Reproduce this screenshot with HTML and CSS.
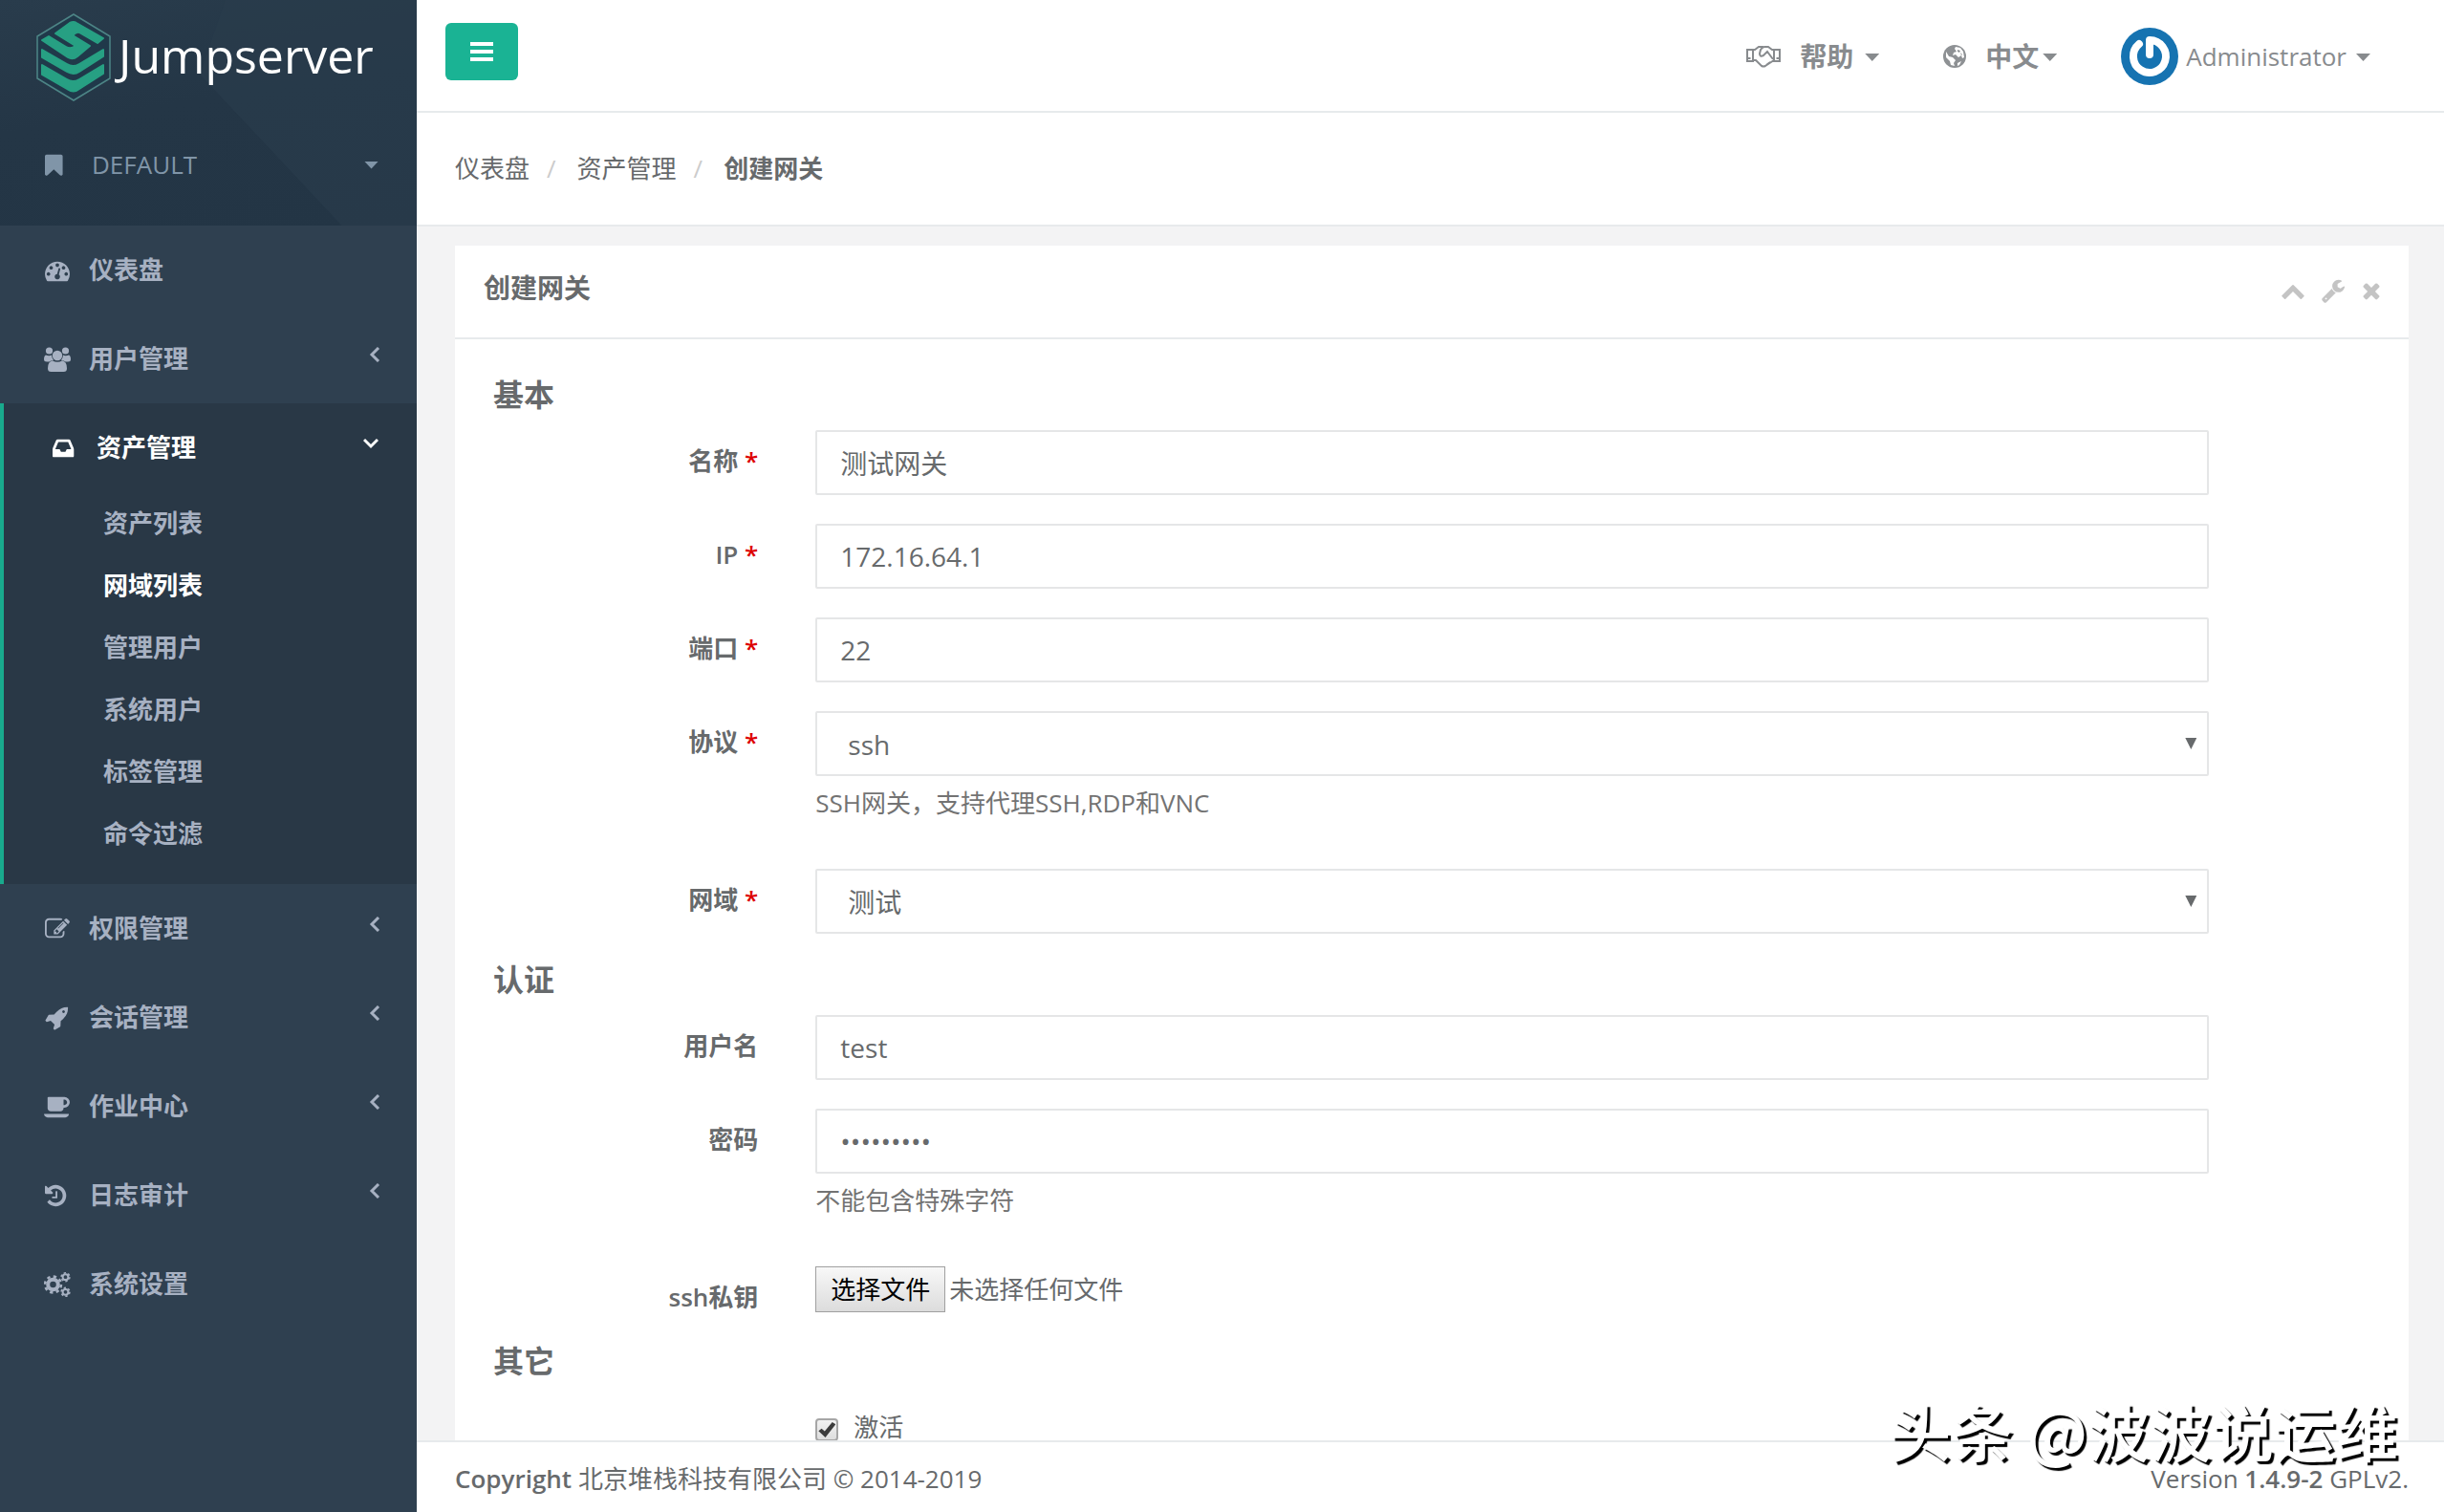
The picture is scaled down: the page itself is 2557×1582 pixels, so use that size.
FILE: index.html
```html
<!DOCTYPE html>
<html lang="zh-CN">
<head>
<meta charset="utf-8">
<title>创建网关 - Jumpserver</title>
<link rel="stylesheet" href="styles.css">
</head>
<body>
<div class="app">
  <aside class="sidebar">
    <div class="brand">
      <a class="logo" href="#">
        <svg class="logo-mark" viewBox="0 0 78 92" aria-hidden="true">
          <path d="M39 1 77 24V68L39 91 1 68V24Z" fill="#20394a" stroke="#4d8586" stroke-width="1.5"/>
          <g fill="#27a083" stroke="#27a083" stroke-width="2" stroke-linejoin="round">
            <path d="M35 10q4-2 7 0L70 26 64 31 45 20q-3-1-7 3L56 34 43 45q-5 4-10 1L6 28l7-4 18 11q5 3 10-1L20 21Z"/>
            <path d="M6 38l26 15q6 4 13 0l25-15v7L45 61q-6 4-13 0L6 46Z"/>
            <path d="M6 54l26 15q6 4 13 0l25-15v9L45 79q-6 5-13 0L6 64Z"/>
          </g>
        </svg>
        <span class="logo-name">Jumpserver</span>
      </a>
      <a class="org" href="#">
        <svg class="icon" viewBox="256 0 1792 1792" aria-hidden="true"><path d="M1420 128q23 0 44 9 33 13 52.5 41t19.5 62v1289q0 34-19.5 62t-52.5 41q-19 8-44 8-48 0-83-32l-441-424-441 424q-36 33-83 33-23 0-44-9-33-13-52.5-41t-19.5-62v-1289q0-34 19.5-62t52.5-41q21-9 44-9h1048z"/></svg>
        <span>DEFAULT</span>
        <i class="caret"></i>
      </a>
    </div>
    <nav>
      <ul class="menu">
        <li><a href="#">
          <svg class="icon" viewBox="0 0 1792 1792" aria-hidden="true"><path d="M384 1152q0-53-37.500-90.500t-90.500-37.500-90.500 37.500-37.500 90.500 37.500 90.500 90.500 37.500 90.500-37.500 37.500-90.500zm192-448q0-53-37.500-90.500t-90.500-37.500-90.500 37.500-37.500 90.500 37.500 90.500 90.500 37.500 90.500-37.500 37.500-90.500zm428 481l101-382q6-26-7.500-48.500t-38.500-29.500-48 6.500-30 39.500l-101 382q-60 5-107 43.500t-63 98.500q-20 77 20 146t117 89 146-20 89-117q16-60-6-117t-72-91zm660-33q0-53-37.500-90.500t-90.500-37.500-90.500 37.500-37.500 90.500 37.500 90.500 90.500 37.500 90.500-37.500 37.500-90.500zm-640-640q0-53-37.500-90.500t-90.500-37.500-90.500 37.500-37.500 90.500 37.500 90.500 90.500 37.500 90.500-37.500 37.500-90.500zm448 192q0-53-37.500-90.500t-90.500-37.500-90.500 37.500-37.500 90.500 37.500 90.500 90.500 37.500 90.500-37.500 37.500-90.500zm320 448q0 261-141 483-19 29-54 29h-1402q-35 0-54-29-141-221-141-483 0-182 71-348t191-286 286-191 348-71 348 71 286 191 191 286 71 348z"/></svg>
          <span>仪表盘</span></a></li>
        <li><a href="#">
          <svg class="icon" viewBox="0 0 28 26" aria-hidden="true"><circle cx="5.500" cy="4" r="3.600"/><circle cx="22.500" cy="4" r="3.600"/><circle cx="14" cy="9" r="5.200"/><path d="M2 8.500q3.500 1.500 6 0 0 3 2 5.500Q7 14 5.500 15.500H3Q0 15.500 0 13q0-4 2-4.500ZM26 8.500q-3.500 1.500-6 0 0 3-2 5.500 3 0 4.500 1.500H25q3 0 3-2.500 0-4-2-4.500ZM9 14.500q5 2.500 10 0 5 .5 5 8 0 3.500-3.500 3.500h-13Q4 26 4 22.500q0-7.500 5-8Z"/></svg>
          <span>用户管理</span><svg class="angle" viewBox="0 0 16 16" aria-hidden="true"><path d="M11 1 4 8l7 7"/></svg></a></li>
        <li class="open"><a href="#">
          <svg class="icon" viewBox="128 0 1792 1792" aria-hidden="true"><path d="M1151 960h316q-1-3-2.500-8.500t-2.500-7.500l-212-496h-708l-212 496q-1 3-2.500 8.500t-2.500 7.500h316l95 192h320zm513 30v482q0 26-19 45t-45 19h-1408q-26 0-45-19t-19-45v-482q0-62 25-123l238-552q10-25 36.500-42t52.500-17h832q26 0 52.500 17t36.500 42l238 552q25 61 25 123z"/></svg>
          <span>资产管理</span><svg class="angle" viewBox="0 0 16 16" aria-hidden="true"><path d="M1 4l7 7 7-7"/></svg></a>
          <ul class="submenu">
            <li><a href="#">资产列表</a></li>
            <li><a href="#" class="current">网域列表</a></li>
            <li><a href="#">管理用户</a></li>
            <li><a href="#">系统用户</a></li>
            <li><a href="#">标签管理</a></li>
            <li><a href="#">命令过滤</a></li>
          </ul></li>
        <li><a href="#">
          <svg class="icon" viewBox="0 0 1792 1792" aria-hidden="true"><path d="M888 1184l116-116-152-152-116 116v56h96v96h56zm440-720q-16-16-33 1l-350 350q-17 17-1 33t33-1l350-350q17-17 1-33zm80 594v190q0 119-84.500 203.500t-203.500 84.500h-832q-119 0-203.500-84.500t-84.500-203.500v-832q0-119 84.500-203.500t203.500-84.500h832q63 0 117 25 15 7 18 23 3 17-9 29l-49 49q-14 14-32 8-23-6-45-6h-832q-66 0-113 47t-47 113v832q0 66 47 113t113 47h832q66 0 113-47t47-113v-126q0-13 9-22l64-64q15-15 35-7t20 29zm-96-738l288 288-672 672h-288v-288zm444 132l-92 92-288-288 92-92q28-28 68-28t68 28l152 152q28 28 28 68t-28 68z"/></svg>
          <span>权限管理</span><svg class="angle" viewBox="0 0 16 16" aria-hidden="true"><path d="M11 1 4 8l7 7"/></svg></a></li>
        <li><a href="#">
          <svg class="icon" viewBox="0 0 1792 1792" aria-hidden="true"><path d="M1440 448q0-40-28-68t-68-28-68 28-28 68 28 68 68 28 68-28 28-68zm224-288q0 249-75.500 430.500t-253.500 360.500q-81 80-195 176l-20 379q-2 16-16 26l-384 224q-7 4-16 4-12 0-23-9l-64-64q-13-14-8-32l85-276-281-281-276 85q-3 1-9 1-14 0-23-9l-64-64q-17-19-5-39l224-384q10-14 26-16l379-20q96-114 176-195 188-187 358-258t431-71q14 0 24 9.500t10 22.500z"/></svg>
          <span>会话管理</span><svg class="angle" viewBox="0 0 16 16" aria-hidden="true"><path d="M11 1 4 8l7 7"/></svg></a></li>
        <li><a href="#">
          <svg class="icon" viewBox="0 0 1920 1792" aria-hidden="true"><path d="M1664 576q0-80-56-136t-136-56h-64v384h64q80 0 136-56t56-136zm-1664 832h1792q0 106-75 181t-181 75h-1280q-106 0-181-75t-75-181zm1856-832q0 159-112.500 271.500t-271.500 112.500h-64v32q0 92-66 158t-158 66h-704q-92 0-158-66t-66-158v-736q0-26 19-45t45-19h1152q159 0 271.500 112.500t112.500 271.500z"/></svg>
          <span>作业中心</span><svg class="angle" viewBox="0 0 16 16" aria-hidden="true"><path d="M11 1 4 8l7 7"/></svg></a></li>
        <li><a href="#">
          <svg class="icon" viewBox="128 0 1792 1792" aria-hidden="true"><path d="M1664 896q0 156-61 298t-164 245-245 164-298 61q-172 0-327-72.500t-264-204.500q-7-10-6.500-22.500t8.500-20.500l137-138q10-9 25-9 16 2 23 12 73 95 179 147t225 52q104 0 198.500-40.500t163.500-109.500 109.500-163.500 40.500-198.500-40.500-198.500-109.500-163.500-163.500-109.500-198.500-40.500q-98 0-188 35.500t-160 101.500l137 138q31 30 14 69-17 40-59 40h-448q-26 0-45-19t-19-45v-448q0-42 40-59 39-17 69 14l130 129q107-101 244.500-156.500t284.500-55.500q156 0 298 61t245 164 164 245 61 298zm-640-288v448q0 14-9 23t-23 9h-320q-14 0-23-9t-9-23v-64q0-14 9-23t23-9h224v-352q0-14 9-23t23-9h64q14 0 23 9t9 23z"/></svg>
          <span>日志审计</span><svg class="angle" viewBox="0 0 16 16" aria-hidden="true"><path d="M11 1 4 8l7 7"/></svg></a></li>
        <li><a href="#">
          <svg class="icon gears" viewBox="0 0 28 26" aria-hidden="true">
            <circle cx="9.500" cy="13" r="5.300" stroke-width="4"/><circle cx="9.500" cy="13" r="8.400" stroke-width="2.600" stroke-dasharray="3.300 3.300"/>
            <circle cx="22.500" cy="5.200" r="2.900" stroke-width="2"/><circle cx="22.500" cy="5.200" r="4.400" stroke-width="1.600" stroke-dasharray="2.300 2.300"/>
            <circle cx="22.500" cy="20.800" r="2.900" stroke-width="2"/><circle cx="22.500" cy="20.800" r="4.400" stroke-width="1.600" stroke-dasharray="2.300 2.300"/></svg>
          <span>系统设置</span></a></li>
      </ul>
    </nav>
  </aside>

  <div class="page">
    <header class="topbar">
      <button class="toggle" type="button" aria-label="切换菜单"><svg viewBox="0 0 24 20" aria-hidden="true"><path d="M0 0h24v4H0zM0 8h24v4H0zM0 16h24v4H0z"/></svg></button>
      <div class="links">
        <a href="#" class="top-link">
          <svg class="hands" viewBox="0 0 36 24" aria-hidden="true"><path d="M1 5h6v12H1zM29 5h6v12h-6zM7 5h2l4-3h5M7 16h3l6 6q2 1 4 0l9-6M29 5h-2l-4-3h-4q-2 0-4 3l-1 4q0 4 4 2l4-4 6 8M21 21l4-3"/><path d="M3 13v2M33 13v2" stroke-width="3"/></svg>
          <strong>帮助</strong><i class="caret"></i></a>
        <a href="#" class="top-link lang">
          <svg class="globe" viewBox="0 0 24 24" aria-hidden="true"><circle cx="12" cy="12" r="12" fill="#8e9194"/><path d="M13 2l5 1 3 4 1 6-2 1-1-3-3 2-3-3-3 1 1-3 3-1-2-3zM3 7l3 5 4 1 3 3-2 3 1 3-4-1-1-4-4-4zM15 19l4-2-2 4-2 1z" fill="#fff"/><path d="M15 5l3 1-1 2-2-1zM18 8l2 2-1 1z" fill="#8e9194"/></svg>
          <strong>中文</strong><i class="caret"></i></a>
        <a href="#" class="top-link user">
          <svg class="avatar" viewBox="0 0 60 60" aria-hidden="true"><circle cx="30" cy="30" r="30" fill="#1673b1"/><path d="M19 17A17 17 0 1 0 30 13V28" fill="none" stroke="#fff" stroke-width="8" stroke-linecap="round" stroke-linejoin="round"/></svg>
          <span>Administrator</span><i class="caret"></i></a>
      </div>
    </header>

    <ol class="breadcrumb">
      <li><a href="#">仪表盘</a></li>
      <li><a href="#">资产管理</a></li>
      <li><strong>创建网关</strong></li>
    </ol>

    <main class="content">
      <section class="panel">
        <div class="panel-head">
          <h1>创建网关</h1>
          <div class="tools">
            <a href="#" aria-label="收起"><svg viewBox="0 0 1792 1792"><path d="M1683 1331l-166 165q-19 19-45 19t-45-19l-531-531-531 531q-19 19-45 19t-45-19l-166-165q-19-19-19-45.500t19-45.500l742-741q19-19 45-19t45 19l742 741q19 19 19 45.500t-19 45.500z"/></svg></a>
            <a href="#" aria-label="设置"><svg viewBox="0 0 1792 1792"><path d="M448 1472q0-26-19-45t-45-19-45 19-19 45 19 45 45 19 45-19 19-45zm644-420l-682 682q-37 37-90 37-52 0-91-37l-106-108q-38-36-38-90 0-53 38-91l681-681q39 98 114.500 173.500t173.500 114.500zm634-435q0 39-23 106-47 134-164.500 217.500t-258.500 83.500q-185 0-316.500-131.500t-131.500-316.500 131.500-316.500 316.500-131.500q58 0 121.500 16.500t107.500 46.500q16 11 16 28t-16 28l-293 169v224l193 107q5-3 79-48.500t135.500-81 70.500-35.500q15 0 23.500 10t8.500 25z"/></svg></a>
            <a href="#" aria-label="关闭"><svg viewBox="128 0 1536 1792"><path d="M1490 1322q0 40-28 68l-136 136q-28 28-68 28t-68-28l-294-294-294 294q-28 28-68 28t-68-28l-136-136q-28-28-28-68t28-68l294-294-294-294q-28-28-28-68t28-68l136-136q28-28 68-28t68 28l294 294 294-294q28-28 68-28t68 28l136 136q28 28 28 68t-28 68l-294 294 294 294q28 28 28 68z"/></svg></a>
          </div>
        </div>
        <form class="form">
          <h2>基本</h2>
          <div class="row"><label for="name">名称 <b>*</b></label><div class="field"><input id="name" class="control" type="text" value="测试网关"></div></div>
          <div class="row"><label for="ip">IP <b>*</b></label><div class="field"><input id="ip" class="control" type="text" value="172.16.64.1"></div></div>
          <div class="row"><label for="port">端口 <b>*</b></label><div class="field"><input id="port" class="control" type="text" value="22"></div></div>
          <div class="row"><label for="protocol">协议 <b>*</b></label><div class="field"><div class="select"><select id="protocol" class="control"><option>ssh</option></select></div><p class="help">SSH网关，支持代理SSH,RDP和VNC</p></div></div>
          <div class="row"><label for="domain">网域 <b>*</b></label><div class="field"><div class="select"><select id="domain" class="control"><option>测试</option></select></div></div></div>
          <h2>认证</h2>
          <div class="row"><label for="username">用户名</label><div class="field"><input id="username" class="control" type="text" value="test"></div></div>
          <div class="row"><label for="password">密码</label><div class="field"><input id="password" class="control" type="password" value="testtest1"><p class="help">不能包含特殊字符</p></div></div>
          <div class="row"><label for="key">ssh私钥</label><div class="field file"><input id="key" class="file-input" type="file"><label class="file-button" for="key">选择文件</label><span>未选择任何文件</span></div></div>
          <h2>其它</h2>
          <div class="row"><div class="field check"><input id="active" type="checkbox" checked><label for="active">激活</label></div></div>
        </form>
      </section>
    </main>

    <footer class="footer">
      <div><strong>Copyright</strong> 北京堆栈科技有限公司 © 2014-2019</div>
      <div>Version <strong>1.4.9-2</strong> GPLv2.</div>
    </footer>
  </div>
</div>
<div class="watermark">头条 @波波说运维</div>
</body>
</html>
```
FILE: styles.css
```css
* { box-sizing: border-box; }

body {
  margin: 0;
  font: 26px/37px "Open Sans", "Noto Sans CJK SC", sans-serif;
  color: #676a6c;
  background: #f3f3f4;
}

a { color: inherit; text-decoration: none; }
ul, ol { list-style: none; margin: 0; padding: 0; }
strong { font-weight: 600; }

.app { display: flex; height: 100vh; overflow: hidden; }

/* Sidebar */
.sidebar { flex: none; width: 436px; background: #2f4050; color: #a7b1c2; }

.brand {
  position: relative;
  height: 236px;
  padding: 14px 38px;
  background: linear-gradient(170deg, #293c4c, #243646 45%, #233545);
}
.brand::before {
  content: "";
  position: absolute;
  inset: 0;
  background: #293c4c;
  clip-path: polygon(54% 0, 100% 0, 100% 100%, 82% 100%, 48% 33%);
  opacity: .7;
}
.logo, .org { position: relative; display: flex; align-items: center; }
.logo { gap: 8px; height: 92px; color: #fff; }
.logo-mark { flex: none; width: 78px; height: 92px; }
.logo-name { padding-bottom: 4px; font: 400 50px/60px "Open Sans", sans-serif; }
.org { margin-top: 48px; padding: 0 2px 0 8px; color: #8095a8; }
.org .icon { margin-right: 22px; }

.caret {
  width: 15px;
  height: 8px;
  background: currentColor;
  clip-path: polygon(0 0, 100% 0, 50% 100%);
}
.org .caret { margin-left: auto; }

.icon { flex: none; width: 28px; height: 26px; margin-right: 19px; fill: currentColor; }
.gears { fill: none; stroke: currentColor; }
.angle { width: 16px; height: 16px; margin: -10px 0 0 auto; fill: none; stroke: currentColor; stroke-width: 3; }

.menu { font-weight: 700; }
.menu > li > a { display: flex; align-items: center; padding: 28px 35px 28px 46px; }
.menu > .open { background: #293846; border-left: 4px solid #19aa8d; }
.menu > .open > a { padding: 28px 40px 28px 50px; color: #fff; }
.submenu { padding-bottom: 20px; }
.submenu a { display: block; padding: 14px 20px 14px 104px; }
.submenu .current { color: #fff; }

/* Top bar */
.page { flex: 1; min-width: 0; display: flex; flex-direction: column; }
.topbar {
  display: flex;
  justify-content: space-between;
  align-items: flex-start;
  height: 118px;
  padding: 24px 77px 0 30px;
  background: #fff;
  border-bottom: 2px solid #e7eaec;
}
.toggle {
  width: 76px;
  height: 60px;
  padding: 2px 0 0;
  border: 0;
  border-radius: 6px;
  background: #1ab394;
}
.toggle svg { width: 24px; height: 20px; fill: #fff; }
.links { display: flex; gap: 67px; color: #888b8e; }
.top-link { display: flex; align-items: center; height: 70px; gap: 12px; }
.top-link strong { font-size: 28px; font-weight: 700; }
.top-link .caret { margin-top: 2px; }
.lang .caret { margin-left: -8px; }
.user { gap: 8px; }
.user .caret { margin-left: 2px; }
.hands { width: 36px; height: 24px; margin-right: 8px; fill: none; stroke: currentColor; stroke-width: 2; }
.globe { width: 24px; height: 24px; margin-right: 8px; }
.avatar { width: 60px; height: 60px; }

.breadcrumb {
  display: flex;
  flex: none;
  height: 119px;
  padding: 40px;
  background: #fff;
  border-bottom: 2px solid #e7eaec;
}
.breadcrumb li + li::before { content: "/"; padding: 0 22px 0 18px; color: #ccc; }

/* Panel */
.content { flex: 1; min-height: 0; overflow: hidden; padding: 20px 37px 0 40px; }
.panel { background: #fff; }
.panel-head {
  display: flex;
  justify-content: space-between;
  height: 98px;
  padding: 26px 28px 26px 30px;
  border-bottom: 2px solid #e7eaec;
}
.panel-head h1 { margin: 0; font-size: 28px; line-height: 37px; font-weight: 600; }
.tools { display: flex; gap: 16px; padding-top: 8px; }
.tools a { display: flex; }
.tools svg { width: 26px; height: 26px; fill: #c4c4c4; }
.tools a:last-child svg { width: 22px; }

.form { padding: 40px 40px 60px; }
.form h2 { margin: 0 0 20px; font-size: 32px; line-height: 35px; font-weight: 600; }
.row {
  display: grid;
  grid-template-columns: 2fr 9fr 1fr;
  margin: 0 -30px 30px;
}
.row > label { padding: 14px 30px 0; text-align: right; font-weight: 600; }
.row b { color: #d00; font-weight: 600; }
.field { grid-column: 2; padding: 0 30px; }
.control {
  display: block;
  width: 100%;
  height: 68px;
  padding: 0 24px;
  border: 2px solid #e5e6e7;
  border-radius: 2px;
  background: #fff;
  color: inherit;
  font: inherit;
  font-size: 28px;
  appearance: none;
}
.select { position: relative; }
.select .control { padding: 2px 32px 0; }
.select::after {
  content: "";
  position: absolute;
  right: 13px;
  top: 28px;
  width: 12px;
  height: 12px;
  background: #676a6c;
  clip-path: polygon(0 0, 100% 0, 50% 100%);
}
.help { margin: 10px 0 20px; color: #737373; }

.file { display: flex; align-items: flex-start; gap: 4px; height: 51px; line-height: 48px; }
.file-input { position: absolute; width: 1px; height: 1px; opacity: 0; }
.file-button {
  padding: 0 15px;
  border: 1px solid #a0a0a0;
  background: linear-gradient(#f8f8f8, #dcdcdc);
  color: #000;
  line-height: 46px;
}

.check { display: flex; align-items: center; gap: 16px; padding-top: 14px; }
.check input {
  display: grid;
  place-items: center;
  width: 24px;
  height: 24px;
  margin: 5px 0 0;
  border: 2px solid #a6a6a6;
  border-radius: 4px;
  background: linear-gradient(#f2f2f2, #dedede);
  appearance: none;
}
.check input:checked::before {
  content: "";
  width: 18px;
  height: 16px;
  background: #3c3c3c;
  clip-path: polygon(0 58%, 18% 42%, 36% 60%, 80% 0, 100% 14%, 40% 100%);
}

/* Footer */
.footer {
  display: flex;
  flex: none;
  justify-content: space-between;
  padding: 20px 37px 16px 40px;
  background: #fff;
  border-top: 2px solid #e7eaec;
}

.watermark {
  position: fixed;
  right: 48px;
  bottom: 48px;
  font: 500 65px/76px "Noto Sans CJK SC", sans-serif;
  color: #fff;
  text-shadow: 3px 3px 1px #000;
}
```
